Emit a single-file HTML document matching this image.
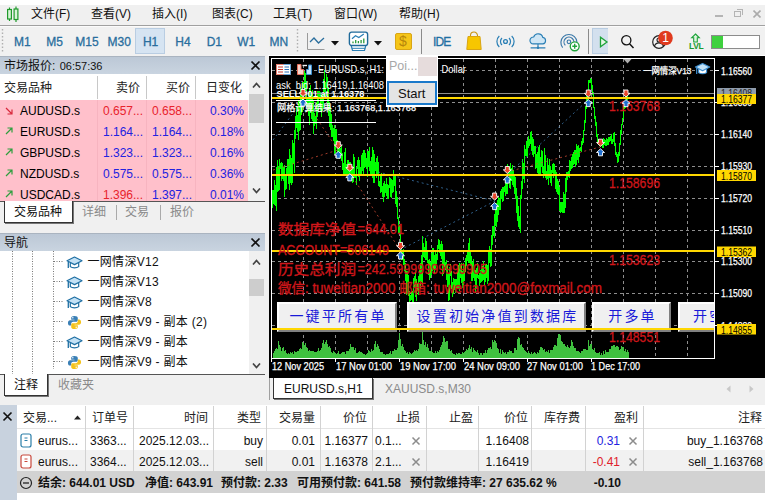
<!DOCTYPE html>
<html lang="zh-CN">
<head>
<meta charset="utf-8">
<title>MetaTrader 5</title>
<style>
*{box-sizing:border-box;margin:0;padding:0}
html,body{width:765px;height:500px;overflow:hidden;background:#f0f0f0}
body{position:relative;font-family:"Liberation Sans","Noto Sans CJK SC",sans-serif;font-size:12px;color:#000;line-height:1}
.abs{position:absolute}
.t{position:absolute;white-space:nowrap;line-height:14px;height:14px}
/* menu */
#topwhite{left:0;top:0;width:765px;height:5px;background:#fff}
#menubar{left:0;top:5px;width:765px;height:20px;background:#f0f0f0}
#menuline{left:0;top:25px;width:765px;height:1px;background:#a0a0a0}
#toolbar{left:0;top:26px;width:765px;height:30px;background:#f1f1f1}
.mi{top:7px;font-size:12px;color:#111}
.tf{top:35px;font-size:12px;color:#2a6e9d;letter-spacing:0;width:32px;text-align:center;-webkit-text-stroke:.3px #2a6e9d}
/* left panels */
.phead{left:0;width:267px;height:18px;background:linear-gradient(#bcc8d6,#c9d4e0);border-top:1px solid #aab4c0}
.phead .t{left:4px;top:2px;font-size:12px;color:#111}
.x{position:absolute;width:11px;height:11px}
.pink{left:0;width:248px;height:21px;background:#ffc0cb}
.sym{left:20px;font-size:12px;color:#000}
.red{color:#e8232b}.blue{color:#2222e0}
.vsep{position:absolute;width:1px;background:#c8c8c8}
.hsep{position:absolute;height:1px;background:#e4e4e4}
.nav{left:87.500px;font-size:12px;color:#111;letter-spacing:.3px}
/* bottom */
.th{font-size:12px;color:#222}
.td{font-size:12px;color:#111}
</style>
</head>
<body>
<!-- ===== MENU BAR ===== -->
<div class="abs" id="topwhite"></div>
<div class="abs" id="menubar"></div>
<div class="abs" id="menuline"></div>
<div class="abs" id="toolbar"></div>
<div class="abs" id="tl2" style="left:0;top:26px;width:765px;height:1px;background:#fbfbfb"></div>
<svg class="abs" style="left:6px;top:6px" width="14" height="17" viewBox="0 0 14 17">
  <path d="M3.5 1.5v2M3.5 13v2M10 0.5v2.5M10 13.5v2.5" stroke="#1f9a2b" stroke-width="1.2" fill="none"/>
  <rect x="1.6" y="3.5" width="3.8" height="9.5" fill="#d8f5d8" stroke="#1f9a2b" stroke-width="1.2"/>
  <rect x="8.1" y="3" width="3.8" height="10.5" fill="#d8f5d8" stroke="#1f9a2b" stroke-width="1.2"/>
</svg>
<div class="t mi" style="left:31px">文件(F)</div>
<div class="t mi" style="left:91px">查看(V)</div>
<div class="t mi" style="left:152px">插入(I)</div>
<div class="t mi" style="left:212px">图表(C)</div>
<div class="t mi" style="left:273px">工具(T)</div>
<div class="t mi" style="left:334px">窗口(W)</div>
<div class="t mi" style="left:399px">帮助(H)</div>
<!-- window buttons -->
<div class="abs" style="left:715px;top:15px;width:8px;height:2px;background:#b4b4b4"></div>
<div class="abs" style="left:734px;top:11px;width:7px;height:6px;border:1.5px solid #b4b4b4"></div>
<div class="abs" style="left:737px;top:9px;width:6px;height:2px;border-top:1.5px solid #b4b4b4;border-right:1.5px solid #b4b4b4;height:6px"></div>
<svg class="abs" style="left:753px;top:10px" width="8" height="8"><path d="M0.5 0.5l7 7M7.5 0.5l-7 7" stroke="#ababab" stroke-width="1.6"/></svg>

<!-- ===== TOOLBAR ===== -->
<svg class="abs" style="left:1px;top:28px" width="4" height="26"><path d="M1.5 1v24" stroke="#b0b0b0" stroke-width="1.4" stroke-dasharray="1.5 2"/></svg>
<div class="abs" style="left:135px;top:28px;width:30px;height:26px;background:#d6e4f2;border:1px solid #b9cde2"></div>
<div class="t tf" style="left:6.3px">M1</div>
<div class="t tf" style="left:38.5px">M5</div>
<div class="t tf" style="left:70.9px">M15</div>
<div class="t tf" style="left:103.2px">M30</div>
<div class="t tf" style="left:134.6px">H1</div>
<div class="t tf" style="left:167.0px">H4</div>
<div class="t tf" style="left:198.3px">D1</div>
<div class="t tf" style="left:230.2px">W1</div>
<div class="t tf" style="left:262.9px">MN</div>
<svg class="abs" style="left:296px;top:28px" width="4" height="26"><path d="M1.5 1v24" stroke="#b0b0b0" stroke-width="1.4" stroke-dasharray="1.5 2"/></svg>
<!-- line chart icon -->
<svg class="abs" style="left:306px;top:32px" width="20" height="20" viewBox="0 0 20 20">
  <path d="M1.5 1v16.5h17" stroke="#9a9a9a" stroke-width="1" fill="none"/>
  <path d="M4 10l4-4 4.5 5 5.5-5" stroke="#2a6e9d" stroke-width="1.3" fill="none"/>
</svg>
<svg class="abs" style="left:330.500px;top:41px" width="8" height="5"><path d="M0 0h8l-4 4.5z" fill="#111"/></svg>
<!-- indicator icon -->
<svg class="abs" style="left:348px;top:31px" width="21" height="21" viewBox="0 0 21 21">
  <path d="M3.200 14.500l1.300 5h12l1.300-5" fill="#fff" stroke="#2a7fb5" stroke-width="1.200"/>
  <path d="M3.800 17.300h13.400" stroke="#2a7fb5" stroke-width="1"/>
  <rect x="1.400" y="1.100" width="18.200" height="13.400" rx="2.200" fill="#fff" stroke="#1f6a9a" stroke-width="1.400"/>
  <path d="M4 7.800l3.500-3l3.300 1.800l5-3.600" stroke="#2a7fb5" stroke-width="1.200" fill="none"/>
  <path d="M5 12.300v-1.800M7.700 12.300v-3.300M10.400 12.300v-2.200M13.100 12.300v-3.300M15.800 12.300v-4.800" stroke="#2a9a3a" stroke-width="1.300"/>
</svg>
<svg class="abs" style="left:374px;top:41px" width="8" height="5"><path d="M0 0h8l-4 4.5z" fill="#111"/></svg>
<!-- $ icon -->
<div class="abs" style="left:395px;top:33px;width:17px;height:17px;background:#f5c518;border:1px solid #d9a514;border-radius:2px"></div>
<div class="t" style="left:399px;top:34px;font-size:14px;color:#b8860b;line-height:15px">$</div>
<div class="abs" style="left:421px;top:29px;width:1px;height:25px;background:#8a8a8a"></div>
<div class="t" style="left:433px;top:35px;font-size:12px;color:#1f6fa3;letter-spacing:-0.900px;-webkit-text-stroke:.3px #1f6fa3">IDE</div>
<!-- bag -->
<svg class="abs" style="left:465px;top:31px" width="18" height="20" viewBox="0 0 18 20">
  <path d="M5.500 6V4.500a3.500 3.500 0 0 1 7 0V6" stroke="#c99410" stroke-width="1.100" fill="none"/>
  <path d="M3 5.500h12l1.200 13H1.800z" fill="#f7c600" stroke="#d9a514" stroke-width="1"/>
</svg>
<!-- signal (o) -->
<svg class="abs" style="left:496px;top:35px" width="19" height="13" viewBox="0 0 19 13">
  <circle cx="9.500" cy="6.500" r="1.900" fill="none" stroke="#2a7fb5" stroke-width="1.300"/>
  <path d="M6 3a4.800 4.800 0 0 0 0 7M13 3a4.800 4.800 0 0 1 0 7" stroke="#2a7fb5" stroke-width="1.200" fill="none"/>
  <path d="M3.300 1a7.500 7.500 0 0 0 0 11M15.700 1a7.500 7.500 0 0 1 0 11" stroke="#2a7fb5" stroke-width="1.200" fill="none"/>
</svg>
<!-- cloud -->
<svg class="abs" style="left:528px;top:33px" width="20" height="17.500" viewBox="0 0 23 20">
  <path d="M6 12.500a4 4 0 0 1 0.500-8a5.500 5.500 0 0 1 10.500 0.500a3.800 3.800 0 0 1 0 7.500z" fill="#cfe6f5" stroke="#2a7fb5" stroke-width="1.3"/>
  <path d="M11.500 12.500v4M3 17h17" stroke="#2a7fb5" stroke-width="1.3"/>
  <circle cx="11.500" cy="17" r="1.400" fill="#2a7fb5"/>
</svg>
<!-- signals+ -->
<svg class="abs" style="left:560px;top:32px" width="20.500" height="20.500" viewBox="0 0 23 23">
  <circle cx="10" cy="11" r="2" fill="none" stroke="#3a78a8" stroke-width="1.300"/>
  <path d="M14 15a5.500 5.500 0 1 0-8 0" fill="none" stroke="#3a78a8" stroke-width="1.300"/>
  <path d="M17 17.500a9 9 0 1 0-14 0" fill="none" stroke="#3a78a8" stroke-width="1.300"/>
  <circle cx="16.500" cy="16" r="5" fill="#fff" stroke="#1ea33a" stroke-width="1.500"/>
  <path d="M13.800 16h5.400M16.500 13.300v5.400" stroke="#1ea33a" stroke-width="1.500"/>
</svg>
<div class="abs" style="left:588px;top:29px;width:1px;height:25px;background:#8a8a8a"></div>
<div class="abs" style="left:592px;top:28px;width:16px;height:26px;background:#d3e0ee;border:1px solid #b9cde2;border-right:0"></div>
<svg class="abs" style="left:599px;top:36px" width="10" height="12"><path d="M1.500 1.200v9.600l6.500-4.800z" fill="#e6f7e6" stroke="#1ea33a" stroke-width="1.300"/></svg>
<!-- search -->
<svg class="abs" style="left:620px;top:34px" width="15" height="15" viewBox="0 0 15 15">
  <circle cx="6.300" cy="6.300" r="4.600" fill="none" stroke="#111" stroke-width="1.300"/>
  <path d="M9.500 9.800l4 4.200" stroke="#111" stroke-width="1.500"/>
</svg>
<!-- chat/user -->
<svg class="abs" style="left:650px;top:28px" width="26" height="26" viewBox="0 0 26 26">
  <circle cx="9" cy="14" r="6.300" fill="#f4f4f4" stroke="#222" stroke-width="1.200"/>
  <circle cx="9" cy="12" r="2" fill="none" stroke="#222" stroke-width="1.100"/>
  <path d="M4.500 18a4.800 4.800 0 0 1 9 0" fill="none" stroke="#222" stroke-width="1.100"/>
  <circle cx="15.500" cy="10" r="7.300" fill="#e03a1e"/>
  <text x="15.500" y="14.200" font-size="12" fill="#fff" text-anchor="middle" font-family="Liberation Sans, sans-serif">1</text>
</svg>
<!-- LVL -->
<svg class="abs" style="left:690px;top:33px" width="11" height="10" viewBox="0 0 11 10">
  <path d="M5.500 1l3.800 3.800h-2v4.200h-3.600v-4.200h-2z" fill="#dff5df" stroke="#1ea33a" stroke-width="1.100"/>
</svg>
<div class="t" style="left:689px;top:42px;font-size:8.500px;color:#1a9a30;line-height:8px;height:8px;letter-spacing:-0.4px;font-weight:bold">LVL</div>
<div class="abs" style="left:711px;top:35px;width:49px;height:14px;background:#fff;border:1px solid #8c8c8c"></div>
<div class="abs" style="left:712px;top:36px;width:11px;height:12px;background:#3fd13f"></div>

<div class="abs" id="wl" style="left:268px;top:55px;width:497px;height:1px;background:#fff"></div>
<div class="abs" style="left:268px;top:55px;width:1px;height:345px;background:#fff"></div>
<!-- ===== MARKET WATCH ===== -->
<div class="abs phead" style="top:56px;width:265px"><div class="t">市场报价: <span style="font-size:11px;margin-left:1px">06:57:36</span></div></div>
<svg class="x" style="left:250px;top:60px" viewBox="0 0 11 11"><path d="M1.500 1.500l8 8M9.500 1.500l-8 8" stroke="#111" stroke-width="1.700"/></svg>
<div class="abs" style="left:0;top:74px;width:249px;height:26px;background:#fff"></div>
<div class="abs" style="left:249px;top:74px;width:16px;height:127px;background:#f0f0f0"></div>
<div class="abs" style="left:249px;top:94px;width:15px;height:29px;background:#cdcdcd"></div>
<svg class="abs" style="left:252px;top:82px" width="9" height="6"><path d="M1 5.500l3.500-4l3.500 4" stroke="#444" stroke-width="1.700" fill="none"/></svg>
<svg class="abs" style="left:252px;top:188px" width="9" height="6"><path d="M1 0.500l3.500 4l3.500-4" stroke="#444" stroke-width="1.700" fill="none"/></svg>
<div class="t th" style="left:4px;top:81px">交易品种</div>
<div class="t th" style="left:116px;top:81px">卖价</div>
<div class="t th" style="left:166px;top:81px">买价</div>
<div class="t th" style="left:206px;top:81px">日变化</div>
<div class="vsep" style="left:97px;top:76px;height:23px"></div>
<div class="vsep" style="left:146px;top:76px;height:23px"></div>
<div class="vsep" style="left:195px;top:76px;height:23px"></div>
<div class="abs" style="left:0;top:100px;width:248px;height:101px;background:#ffc0cb"></div>
<div class="abs" style="left:97px;top:100px;width:1px;height:101px;background:#f7b4c0"></div>
<div class="abs" style="left:146px;top:100px;width:1px;height:101px;background:#f7b4c0"></div>
<div class="abs" style="left:195px;top:100px;width:1px;height:101px;background:#f7b4c0"></div>
<svg class="abs" style="left:5px;top:107px" width="8" height="8"><path d="M1 1l6 6M2.500 7h4.500v-4.500" stroke="#d8283c" stroke-width="1.200" fill="none"/></svg><div class="t sym" style="top:104px">AUDUSD.s</div><div class="t red" style="left:103px;top:104px">0.657...</div><div class="t red" style="left:152px;top:104px">0.658...</div><div class="t blue" style="right:521px;top:104px">0.30%</div>
<svg class="abs" style="left:5px;top:127px" width="8" height="8"><path d="M1 7l6-6M2.500 1h4.500v4.500" stroke="#2e9e3e" stroke-width="1.200" fill="none"/></svg><div class="t sym" style="top:125px">EURUSD.s</div><div class="t blue" style="left:103px;top:125px">1.164...</div><div class="t blue" style="left:152px;top:125px">1.164...</div><div class="t blue" style="right:521px;top:125px">0.18%</div>
<svg class="abs" style="left:5px;top:148px" width="8" height="8"><path d="M1 7l6-6M2.500 1h4.500v4.500" stroke="#2e9e3e" stroke-width="1.200" fill="none"/></svg><div class="t sym" style="top:146px">GBPUSD.s</div><div class="t blue" style="left:103px;top:146px">1.323...</div><div class="t blue" style="left:152px;top:146px">1.323...</div><div class="t blue" style="right:521px;top:146px">0.16%</div>
<svg class="abs" style="left:5px;top:169px" width="8" height="8"><path d="M1 7l6-6M2.500 1h4.500v4.500" stroke="#2e9e3e" stroke-width="1.200" fill="none"/></svg><div class="t sym" style="top:167px">NZDUSD.s</div><div class="t blue" style="left:103px;top:167px">0.575...</div><div class="t blue" style="left:152px;top:167px">0.575...</div><div class="t blue" style="right:521px;top:167px">0.36%</div>
<svg class="abs" style="left:5px;top:190px" width="8" height="8"><path d="M1 7l6-6M2.500 1h4.500v4.500" stroke="#2e9e3e" stroke-width="1.200" fill="none"/></svg><div class="t sym" style="top:188px">USDCAD.s</div><div class="t red" style="left:103px;top:188px">1.396...</div><div class="t blue" style="left:152px;top:188px">1.397...</div><div class="t blue" style="right:521px;top:188px">0.01%</div>

<div class="abs" style="left:0;top:201px;width:267px;height:24px;background:#f0f0f0"></div>
<div class="abs" style="left:0;top:201px;width:265px;height:1px;background:#555"></div>
<div class="abs" style="left:4px;top:201px;width:69px;height:22px;background:#fff;border:1px solid #333;border-top:0;box-shadow:1px 1px 0 #777"></div>
<div class="t" style="left:14px;top:205px;font-size:12px;color:#111">交易品种</div>
<div class="t" style="left:82px;top:205px;font-size:12px;color:#8a8a8a">详细</div>
<div class="t" style="left:125px;top:205px;font-size:12px;color:#8a8a8a">交易</div>
<div class="t" style="left:170px;top:205px;font-size:12px;color:#8a8a8a">报价</div>
<div class="abs" style="left:116px;top:205px;width:1px;height:15px;background:#aaa"></div>
<div class="abs" style="left:160px;top:205px;width:1px;height:15px;background:#aaa"></div>

<!-- ===== NAVIGATOR ===== -->
<div class="abs phead" style="top:233px;width:265px"><div class="t">导航</div></div>
<svg class="x" style="left:250px;top:237px" viewBox="0 0 11 11"><path d="M1.500 1.500l8 8M9.500 1.500l-8 8" stroke="#111" stroke-width="1.700"/></svg>
<div class="abs" style="left:0;top:251px;width:249px;height:123px;background:#fff"></div>
<div class="abs" style="left:249px;top:251px;width:16px;height:123px;background:#f0f0f0"></div>
<div class="abs" style="left:249px;top:279px;width:15px;height:17px;background:#cdcdcd"></div>
<svg class="abs" style="left:252px;top:259px" width="9" height="6"><path d="M1 5.500l3.500-4l3.500 4" stroke="#444" stroke-width="1.700" fill="none"/></svg>
<svg class="abs" style="left:252px;top:363px" width="9" height="6"><path d="M1 0.500l3.500 4l3.500-4" stroke="#444" stroke-width="1.700" fill="none"/></svg>
<svg class="abs" style="left:10px;top:251px" width="60" height="123">
  <path d="M2.500 0v123M22.500 0v123M43.500 0v118" stroke="#777" stroke-width="1" stroke-dasharray="1 1.500"/>
  <path d="M44 10.500h10M44 30.500h10M44 50.500h10M44 70.500h10M44 90.500h10M44 110.500h10" stroke="#777" stroke-width="1" stroke-dasharray="1 1.500"/>
</svg>
<svg class="abs" style="left:66px;top:256px" width="17" height="14" viewBox="0 0 17 14"><path d="M4.300 6.800v3.800c2 1.700 6.400 1.700 8.400 0v-3.800" fill="#fff" stroke="#1f6fa3" stroke-width="1.200"/><path d="M1 4.800l7.500-3.800l7.500 3.800l-7.500 3.800z" fill="#c4e2f6" stroke="#1f6fa3" stroke-width="1.200" stroke-linejoin="round"/><path d="M2.300 5.800v6.200" stroke="#1f6fa3" stroke-width="1.300"/></svg><div class="t nav" style="top:255px">一网情深V12</div>
<svg class="abs" style="left:66px;top:276px" width="17" height="14" viewBox="0 0 17 14"><path d="M4.300 6.800v3.800c2 1.700 6.400 1.700 8.400 0v-3.800" fill="#fff" stroke="#1f6fa3" stroke-width="1.200"/><path d="M1 4.800l7.500-3.800l7.500 3.800l-7.500 3.800z" fill="#c4e2f6" stroke="#1f6fa3" stroke-width="1.200" stroke-linejoin="round"/><path d="M2.300 5.800v6.200" stroke="#1f6fa3" stroke-width="1.300"/></svg><div class="t nav" style="top:275px">一网情深V13</div>
<svg class="abs" style="left:66px;top:296px" width="17" height="14" viewBox="0 0 17 14"><path d="M4.300 6.800v3.800c2 1.700 6.400 1.700 8.400 0v-3.800" fill="#fff" stroke="#1f6fa3" stroke-width="1.200"/><path d="M1 4.800l7.500-3.800l7.500 3.800l-7.500 3.800z" fill="#c4e2f6" stroke="#1f6fa3" stroke-width="1.200" stroke-linejoin="round"/><path d="M2.300 5.800v6.200" stroke="#1f6fa3" stroke-width="1.300"/></svg><div class="t nav" style="top:295px">一网情深V8</div>
<svg class="abs" style="left:67px;top:315px" width="15" height="15" viewBox="0 0 16 16"><path d="M7.900 1C5 1 4.500 2.200 4.500 3.200V5h3.500v.7H3.200C2 5.700 1 6.700 1 8.400c0 1.800.9 2.800 2.100 2.800h1.400V9.300c0-1.100.9-2 2-2h3.400c.9 0 1.600-.7 1.600-1.600V3.200C11.500 2 10.500 1 7.900 1z" fill="#3a7fb5"/><path d="M7.900 1C5 1 4.500 2.200 4.500 3.200V5h3.500v.7H3.200C2 5.700 1 6.700 1 8.400c0 1.800.9 2.800 2.100 2.800h1.400V9.300c0-1.100.9-2 2-2h3.400c.9 0 1.600-.7 1.600-1.600V3.200C11.500 2 10.500 1 7.900 1z" fill="#f4c21a" transform="rotate(180 8 8)"/><circle cx="6.200" cy="3" r=".8" fill="#fff"/><circle cx="9.800" cy="13" r=".8" fill="#fff"/></svg><div class="t nav" style="top:315px">一网情深V9 - 副本 (2)</div>
<svg class="abs" style="left:66px;top:336px" width="17" height="14" viewBox="0 0 17 14"><path d="M4.300 6.800v3.800c2 1.700 6.400 1.700 8.400 0v-3.800" fill="#fff" stroke="#1f6fa3" stroke-width="1.200"/><path d="M1 4.800l7.500-3.800l7.500 3.800l-7.500 3.800z" fill="#c4e2f6" stroke="#1f6fa3" stroke-width="1.200" stroke-linejoin="round"/><path d="M2.300 5.800v6.200" stroke="#1f6fa3" stroke-width="1.300"/></svg><div class="t nav" style="top:335px">一网情深V9 - 副本</div>
<svg class="abs" style="left:67px;top:355px" width="15" height="15" viewBox="0 0 16 16"><path d="M7.900 1C5 1 4.500 2.200 4.500 3.200V5h3.500v.7H3.200C2 5.700 1 6.700 1 8.400c0 1.800.9 2.800 2.100 2.800h1.400V9.300c0-1.100.9-2 2-2h3.400c.9 0 1.600-.7 1.600-1.600V3.200C11.500 2 10.500 1 7.900 1z" fill="#3a7fb5"/><path d="M7.900 1C5 1 4.500 2.200 4.500 3.200V5h3.500v.7H3.200C2 5.700 1 6.700 1 8.400c0 1.800.9 2.800 2.100 2.800h1.400V9.300c0-1.100.9-2 2-2h3.400c.9 0 1.600-.7 1.600-1.600V3.200C11.500 2 10.500 1 7.900 1z" fill="#f4c21a" transform="rotate(180 8 8)"/><circle cx="6.200" cy="3" r=".8" fill="#fff"/><circle cx="9.800" cy="13" r=".8" fill="#fff"/></svg><div class="t nav" style="top:355px">一网情深V9 - 副本</div>

<div class="abs" style="left:0;top:374px;width:267px;height:26px;background:#f0f0f0"></div>
<div class="abs" style="left:0;top:374px;width:265px;height:1px;background:#555"></div>
<div class="abs" style="left:4px;top:374px;width:44px;height:22px;background:#fff;border:1px solid #333;border-top:0;box-shadow:1px 1px 0 #777"></div>
<div class="t" style="left:14px;top:378px;font-size:12px;color:#111">注释</div>
<div class="t" style="left:58px;top:378px;font-size:12px;color:#8a8a8a">收藏夹</div>

<!-- ===== CHART ===== -->
<div class="abs" style="left:269px;top:56px;width:496px;height:322px;background:#000"></div>
<div class="abs" style="left:267px;top:56px;width:2px;height:344px;background:#f0f0f0"></div>
<svg class="abs" style="left:269px;top:56px" width="496" height="321" viewBox="269 56 496 321" font-family="Liberation Sans, Noto Sans CJK SC, sans-serif">
  <!-- grid -->
  <g stroke="#8e8e8e" stroke-width="1" stroke-dasharray="3.300 2.700" fill="none" shape-rendering="crispEdges">
    <path d="M303.5 59V358M335.5 59V358M367.5 59V358M399.5 59V358M431.5 59V358M463.5 59V358M495.5 59V358M527.5 59V358M559.5 59V358M591.5 59V358M623.5 59V358M655.5 59V358M687.5 59V358"/>
    <path d="M272 70.500H714M272 102.500H714M272 134.500H714M272 166.500H714M272 198.500H714M272 230.500H714M272 261.500H714M272 293.500H714M272 325.500H714"/>
  </g>
  <!-- volumes -->
  <path d="M273.5 358V353M274.5 358V351M275.5 358V349M276.5 358V348M277.5 358V349M278.5 358V341M279.5 358V345M280.5 358V347M281.5 358V351M282.5 358V348M283.5 358V347M284.5 358V351M285.5 358V350M286.5 358V353M287.5 358V354M288.5 358V353M289.5 358V354M290.5 358V352M291.5 358V353M292.5 358V352M293.5 358V354M294.5 358V351M295.5 358V352M296.5 358V352M297.5 358V351M298.5 358V351M299.5 358V349M300.5 358V348M301.5 358V349M302.5 358V342M303.5 358V343M304.5 358V345M305.5 358V343M306.5 358V347M307.5 358V348M308.5 358V351M309.5 358V350M310.5 358V351M311.5 358V351M312.5 358V351M313.5 358V351M314.5 358V352M315.5 358V352M316.5 358V352M317.5 358V351M318.5 358V348M319.5 358V351M320.5 358V350M321.5 358V348M322.5 358V343M323.5 358V340M324.5 358V344M325.5 358V342M326.5 358V340M327.5 358V344M328.5 358V347M329.5 358V346M330.5 358V348M331.5 358V352M332.5 358V353M333.5 358V351M334.5 358V352M335.5 358V353M336.5 358V354M337.5 358V353M338.5 358V351M339.5 358V354M340.5 358V354M341.5 358V353M342.5 358V352M343.5 358V352M344.5 358V352M345.5 358V354M346.5 358V351M347.5 358V351M348.5 358V351M349.5 358V349M350.5 358V344M351.5 358V347M352.5 358V347M353.5 358V347M354.5 358V350M355.5 358V348M356.5 358V353M357.5 358V353M358.5 358V352M359.5 358V351M360.5 358V352M361.5 358V352M362.5 358V353M363.5 358V354M364.5 358V354M365.5 358V355M366.5 358V354M367.5 358V353M368.5 358V350M369.5 358V351M370.5 358V352M371.5 358V349M372.5 358V351M373.5 358V350M374.5 358V344M375.5 358V341M376.5 358V347M377.5 358V344M378.5 358V346M379.5 358V349M380.5 358V352M381.5 358V352M382.5 358V352M383.5 358V354M384.5 358V354M385.5 358V355M386.5 358V354M387.5 358V354M388.5 358V354M389.5 358V353M390.5 358V351M391.5 358V354M392.5 358V351M393.5 358V351M394.5 358V349M395.5 358V350M396.5 358V350M397.5 358V348M398.5 358V340M399.5 358V333M400.5 358V339M401.5 358V346M402.5 358V344M403.5 358V347M404.5 358V350M405.5 358V351M406.5 358V353M407.5 358V352M408.5 358V354M409.5 358V352M410.5 358V353M411.5 358V354M412.5 358V353M413.5 358V352M414.5 358V350M415.5 358V351M416.5 358V350M417.5 358V351M418.5 358V349M419.5 358V343M420.5 358V344M421.5 358V344M422.5 358V326M423.5 358V340M424.5 358V345M425.5 358V342M426.5 358V347M427.5 358V344M428.5 358V348M429.5 358V351M430.5 358V351M431.5 358V350M432.5 358V352M433.5 358V353M434.5 358V353M435.5 358V351M436.5 358V353M437.5 358V351M438.5 358V352M439.5 358V350M440.5 358V347M441.5 358V345M442.5 358V342M443.5 358V336M444.5 358V338M445.5 358V342M446.5 358V341M447.5 358V341M448.5 358V349M449.5 358V349M450.5 358V351M451.5 358V350M452.5 358V353M453.5 358V354M454.5 358V354M455.5 358V355M456.5 358V353M457.5 358V354M458.5 358V353M459.5 358V353M460.5 358V354M461.5 358V354M462.5 358V352M463.5 358V353M464.5 358V352M465.5 358V351M466.5 358V349M467.5 358V350M468.5 358V348M469.5 358V345M470.5 358V349M471.5 358V347M472.5 358V352M473.5 358V348M474.5 358V350M475.5 358V351M476.5 358V352M477.5 358V350M478.5 358V353M479.5 358V355M480.5 358V353M481.5 358V353M482.5 358V355M483.5 358V353M484.5 358V353M485.5 358V350M486.5 358V353M487.5 358V350M488.5 358V348M489.5 358V348M490.5 358V347M491.5 358V349M492.5 358V340M493.5 358V342M494.5 358V340M495.5 358V341M496.5 358V343M497.5 358V348M498.5 358V349M499.5 358V353M500.5 358V349M501.5 358V354M502.5 358V350M503.5 358V352M504.5 358V353M505.5 358V352M506.5 358V354M507.5 358V352M508.5 358V352M509.5 358V350M510.5 358V351M511.5 358V351M512.5 358V353M513.5 358V353M514.5 358V348M515.5 358V348M516.5 358V350M517.5 358V339M518.5 358V337M519.5 358V338M520.5 358V345M521.5 358V344M522.5 358V347M523.5 358V348M524.5 358V350M525.5 358V351M526.5 358V352M527.5 358V353M528.5 358V351M529.5 358V353M530.5 358V354M531.5 358V352M532.5 358V354M533.5 358V353M534.5 358V352M535.5 358V353M536.5 358V354M537.5 358V352M538.5 358V353M539.5 358V350M540.5 358V347M541.5 358V347M542.5 358V348M543.5 358V350M544.5 358V349M545.5 358V352M546.5 358V351M547.5 358V352M548.5 358V350M549.5 358V353M550.5 358V350M551.5 358V350M552.5 358V350M553.5 358V347M554.5 358V345M555.5 358V345M556.5 358V346M557.5 358V338M558.5 358V334M559.5 358V334M560.5 358V335M561.5 358V341M562.5 358V342M563.5 358V344M564.5 358V344M565.5 358V346M566.5 358V347M567.5 358V345M568.5 358V347M569.5 358V348M570.5 358V346M571.5 358V340M572.5 358V342M573.5 358V346M574.5 358V348M575.5 358V348M576.5 358V351M577.5 358V351M578.5 358V351M579.5 358V352M580.5 358V353M581.5 358V351M582.5 358V351M583.5 358V349M584.5 358V349M585.5 358V349M586.5 358V350M587.5 358V350M588.5 358V340M589.5 358V346M590.5 358V344M591.5 358V344M592.5 358V349M593.5 358V350M594.5 358V348M595.5 358V352M596.5 358V353M597.5 358V353M598.5 358V353M599.5 358V352M600.5 358V355M601.5 358V353M602.5 358V355M603.5 358V351M604.5 358V354M605.5 358V350M606.5 358V352M607.5 358V352M608.5 358V352M609.5 358V349M610.5 358V349M611.5 358V346M612.5 358V346M613.5 358V345M614.5 358V345M615.5 358V347M616.5 358V346M617.5 358V346M618.5 358V347M619.5 358V350M620.5 358V349M621.5 358V346M622.5 358V347M623.5 358V347M624.5 358V351M625.5 358V349M626.5 358V352M627.5 358V350M628.5 358V352" stroke="#3fc13f" stroke-width="1" shape-rendering="crispEdges"/>
  <!-- price -->
  <path d="M272.5 190V208M273.5 190V204M274.5 180V205M275.5 185V206M276.5 167V211M277.5 160V192M278.5 166V191M279.5 159V190M280.5 163V169M281.5 162V181M282.5 163V179M283.5 167V181M284.5 165V197M285.5 176V190M286.5 168V189M287.5 159V175M288.5 159V184M289.5 149V190M290.5 155V183M291.5 158V185M292.5 140V183M293.5 143V164M294.5 130V173M295.5 116V139M296.5 106V128M297.5 115V132M298.5 100V140M299.5 100V131M300.5 87V130M301.5 91V115M302.5 82V112M303.5 82V88M304.5 71V89M305.5 73V91M306.5 81V107M307.5 98V107M308.5 95V116M309.5 88V125M310.5 85V113M311.5 95V119M312.5 90V121M313.5 100V134M314.5 113V126M315.5 116V124M316.5 102V129M317.5 91V117M318.5 91V110M319.5 91V99M320.5 92V111M321.5 95V117M322.5 93V111M323.5 79V108M324.5 70V92M325.5 82V99M326.5 74V88M327.5 77V106M328.5 87V116M329.5 102V127M330.5 107V130M331.5 114V137M332.5 125V137M333.5 128V141M334.5 125V154M335.5 129V153M336.5 129V142M337.5 140V156M338.5 145V157M339.5 142V159M340.5 148V154M341.5 146V161M342.5 153V170M343.5 163V174M344.5 152V175M345.5 148V176M346.5 164V174M347.5 160V176M348.5 160V177M349.5 162V177M350.5 162V174M351.5 166V180M352.5 169V183M353.5 154V182M354.5 157V178M355.5 174V178M356.5 167V185M357.5 160V169M358.5 157V177M359.5 160V181M360.5 167V176M361.5 155V176M362.5 153V171M363.5 150V174M364.5 150V168M365.5 153V167M366.5 158V169M367.5 151V177M368.5 151V167M369.5 147V171M370.5 161V174M371.5 157V176M372.5 147V178M373.5 150V183M374.5 154V183M375.5 162V171M376.5 158V178M377.5 156V174M378.5 162V186M379.5 181V187M380.5 175V193M381.5 173V192M382.5 186V197M383.5 183V202M384.5 181V197M385.5 184V193M386.5 178V196M387.5 184V199M388.5 185V199M389.5 177V188M390.5 178V197M391.5 179V198M392.5 180V193M393.5 170V192M394.5 175V186M395.5 176V204M396.5 191V207M397.5 197V219M398.5 217V233M399.5 225V234M400.5 226V245M401.5 242V260M402.5 250V260M403.5 249V265M404.5 259V271M405.5 263V281M406.5 271V295M407.5 271V294M408.5 275V296M409.5 291V305M410.5 295V301M411.5 292V300M412.5 291V303M413.5 278V302M414.5 276V288M415.5 270V297M416.5 279V301M417.5 284V291M418.5 276V295M419.5 270V282M420.5 263V289M421.5 255V282M422.5 236V286M423.5 243V257M424.5 247V258M425.5 238V260M426.5 241V260M427.5 250V263M428.5 260V275M429.5 259V280M430.5 262V278M431.5 253V275M432.5 248V271M433.5 248V270M434.5 255V273M435.5 251V270M436.5 254V264M437.5 245V260M438.5 239V249M439.5 240V253M440.5 244V256M441.5 241V259M442.5 244V276M443.5 250V274M444.5 252V267M445.5 262V270M446.5 260V280M447.5 265V287M448.5 274V301M449.5 267V300M450.5 264V276M451.5 271V289M452.5 282V297M453.5 278V294M454.5 279V290M455.5 279V293M456.5 279V289M457.5 272V288M458.5 265V289M459.5 263V291M460.5 264V278M461.5 263V283M462.5 271V288M463.5 263V289M464.5 269V281M465.5 258V272M466.5 255V266M467.5 250V261M468.5 243V263M469.5 238V263M470.5 251V266M471.5 256V281M472.5 262V281M473.5 259V278M474.5 270V281M475.5 270V293M476.5 268V288M477.5 263V278M478.5 275V279M479.5 273V286M480.5 270V283M481.5 266V282M482.5 266V281M483.5 261V280M484.5 270V285M485.5 265V282M486.5 264V278M487.5 265V284M488.5 250V281M489.5 246V263M490.5 249V267M491.5 235V266M492.5 226V245M493.5 226V236M494.5 214V238M495.5 204V226M496.5 203V227M497.5 200V222M498.5 197V215M499.5 198V210M500.5 191V210M501.5 189V199M502.5 187V202M503.5 187V201M504.5 186V192M505.5 178V196M506.5 177V194M507.5 164V194M508.5 166V175M509.5 166V188M510.5 163V189M511.5 168V181M512.5 165V185M513.5 170V187M514.5 174V194M515.5 177V199M516.5 188V213M517.5 196V221M518.5 206V227M519.5 216V229M520.5 195V233M521.5 181V199M522.5 159V189M523.5 163V179M524.5 145V183M525.5 149V156M526.5 141V156M527.5 140V157M528.5 136V148M529.5 139V146M530.5 132V144M531.5 131V151M532.5 137V155M533.5 139V157M534.5 146V154M535.5 146V169M536.5 154V168M537.5 152V173M538.5 147V174M539.5 145V176M540.5 157V174M541.5 150V167M542.5 151V173M543.5 166V178M544.5 148V176M545.5 155V178M546.5 171V180M547.5 158V179M548.5 165V185M549.5 159V178M550.5 166V183M551.5 170V186M552.5 164V173M553.5 163V178M554.5 164V176M555.5 170V189M556.5 172V192M557.5 179V194M558.5 181V195M559.5 187V211M560.5 202V213M561.5 202V212M562.5 202V213M563.5 192V213M564.5 194V213M565.5 178V208M566.5 172V192M567.5 172V180M568.5 171V177M569.5 160V178M570.5 161V171M571.5 157V169M572.5 154V168M573.5 152V165M574.5 150V164M575.5 150V167M576.5 144V165M577.5 146V160M578.5 145V163M579.5 148V157M580.5 147V151M581.5 141V152M582.5 138V145M583.5 130V143M584.5 120V131M585.5 106V123M586.5 96V109M587.5 91V101M588.5 80V93M589.5 80V83M590.5 78V83M591.5 79V89M592.5 85V95M593.5 92V108M594.5 107V119M595.5 116V126M596.5 122V137M597.5 134V142M598.5 139V145M599.5 142V146M600.5 142V147M601.5 142V146M602.5 144V148M603.5 138V148M604.5 139V145M605.5 140V146M606.5 138V146M607.5 139V145M608.5 137V145M609.5 137V142M610.5 136V141M611.5 134V144M612.5 139V144M613.5 133V142M614.5 132V146M615.5 143V155M616.5 152V157M617.5 154V163M618.5 152V162M619.5 143V156M620.5 130V145M621.5 124V134M622.5 118V125M623.5 106V119M624.5 105V109M625.5 100V108M626.5 95V103M627.5 95V100" stroke="#00ff00" stroke-width="1" shape-rendering="crispEdges"/>
  <!-- trade lines -->
  <g fill="none" stroke-width="1" stroke-dasharray="2 3" opacity=".75">
    <path d="M273 170L338 150M303 98L338 150M350 173L400 250M507 172L600 147" stroke="#d8503a"/>
    <path d="M273 140L303 100M400 250L495 201M378 172L495 201M507 175L588 100" stroke="#3f7fb8"/>
  </g>
  <!-- bid line -->
  <path d="M272 93.500H714" stroke="#8c8c8c" stroke-width="1" shape-rendering="crispEdges"/>
  <!-- yellow levels -->
  <g fill="#ffd700" shape-rendering="crispEdges">
    <rect x="272" y="97" width="442" height="2"/>
    <rect x="272" y="174" width="442" height="2"/>
    <rect x="272" y="250" width="442" height="2"/>
    <rect x="272" y="328" width="442" height="2"/>
  </g>
  <!-- frame -->
  <path d="M271.500 58.500H714.500V358.500H271.500z" stroke="#fff" stroke-width="1" fill="none" shape-rendering="crispEdges"/>
  <path d="M271.500 358V362M335.500 358V362M399.500 358V362M463.500 358V362M527.500 358V362M591.500 358V362" stroke="#fff" stroke-width="1" shape-rendering="crispEdges"/>
  <path d="M715 70.500h4M715 134.500h4M715 166.500h4M715 198.500h4M715 230.500h4M715 261.500h4M715 293.500h4M715 325.500h4M715 102.500h4" stroke="#fff" stroke-width="1" shape-rendering="crispEdges"/>
  <!-- time labels -->
  <g fill="#fff" font-size="10.500" stroke="#fff" stroke-width=".25">
    <text x="272" y="370" textLength="52" lengthAdjust="spacingAndGlyphs">12 Nov 2025</text>
    <text x="336" y="370" textLength="56" lengthAdjust="spacingAndGlyphs">17 Nov 01:00</text>
    <text x="400" y="370" textLength="56" lengthAdjust="spacingAndGlyphs">19 Nov 17:00</text>
    <text x="464" y="370" textLength="56" lengthAdjust="spacingAndGlyphs">24 Nov 09:00</text>
    <text x="527" y="370" textLength="56" lengthAdjust="spacingAndGlyphs">27 Nov 01:00</text>
    <text x="591" y="370" textLength="49" lengthAdjust="spacingAndGlyphs">1 Dec 17:00</text>
  </g>
  <!-- price labels -->
  <g fill="#fff" font-size="10.500" stroke="#fff" stroke-width=".25">
    <text x="721" y="74.500" textLength="31" lengthAdjust="spacingAndGlyphs">1.16560</text>
    <text x="721" y="106" textLength="31" lengthAdjust="spacingAndGlyphs">1.16350</text>
    <text x="721" y="138" textLength="31" lengthAdjust="spacingAndGlyphs">1.16140</text>
    <text x="721" y="170" textLength="31" lengthAdjust="spacingAndGlyphs">1.15930</text>
    <text x="721" y="202" textLength="31" lengthAdjust="spacingAndGlyphs">1.15720</text>
    <text x="721" y="234" textLength="31" lengthAdjust="spacingAndGlyphs">1.15510</text>
    <text x="721" y="265" textLength="31" lengthAdjust="spacingAndGlyphs">1.15300</text>
    <text x="721" y="297" textLength="31" lengthAdjust="spacingAndGlyphs">1.15090</text>
    <text x="721" y="329.500" textLength="31" lengthAdjust="spacingAndGlyphs">1.14880</text>
  </g>
  <rect x="717" y="88" width="39" height="6" fill="#8f9bab"/>
  <text x="721" y="97" font-size="10.500" fill="#222" textLength="31" lengthAdjust="spacingAndGlyphs">1.16408</text>
  <g font-size="10.500">
    <rect x="717" y="94" width="39" height="10" fill="#ffd700"/><text x="721" y="102.500" fill="#000" textLength="31" lengthAdjust="spacingAndGlyphs">1.16377</text>
    <rect x="717" y="170" width="39" height="11" fill="#ffd700"/><text x="721" y="179.500" fill="#000" textLength="31" lengthAdjust="spacingAndGlyphs">1.15870</text>
    <rect x="717" y="246.500" width="39" height="10.500" fill="#ffd700"/><text x="721" y="256" fill="#000" textLength="31" lengthAdjust="spacingAndGlyphs">1.15362</text>
    <rect x="717" y="324" width="39" height="10.500" fill="#ffd700"/><text x="721" y="333.500" fill="#000" textLength="31" lengthAdjust="spacingAndGlyphs">1.14855</text>
  </g>
  <!-- header text -->
  <g fill="#fff" font-size="10.500">
    <rect x="276.500" y="64.500" width="14" height="10" fill="#fff" stroke="#e87c6c" stroke-width="1"/>
    <path d="M283.500 64.500h7v10h-7" fill="none" stroke="#6aa8dc" stroke-width="1"/>
    <path d="M278 67h5M278 69.500h5M278 72h5" stroke="#c8392b" stroke-width="1.200"/>
    <path d="M284.500 67h4.500M284.500 69.500h4.500M284.500 72h4.500" stroke="#2a6fb5" stroke-width="1.200"/>
    <path d="M297.500 74.500V64.500h3.500v5h2.500v5z" fill="#f9d6cc" stroke="#e8705c" stroke-width="1"/>
    <path d="M302.500 65.500h4.500" stroke="#f0f0f0" stroke-width="1.400"/>
    <path d="M306.500 74.500v-5h2v-4.500h3v9.500z" fill="#bfe0f7" stroke="#3f8fcf" stroke-width="1"/>
    <text x="318" y="73" font-size="11" textLength="66" lengthAdjust="spacingAndGlyphs">EURUSD.s, H1:</text>
    <text x="441.500" y="73" font-size="11" textLength="24.500" lengthAdjust="spacingAndGlyphs">Dollar</text>
    <text x="276" y="88.500" font-size="10" textLength="108" lengthAdjust="spacingAndGlyphs">ask_bid: 1.16419,1.16408</text>
    <text x="276.500" y="96.500" font-size="9.500" font-weight="bold" textLength="88" lengthAdjust="spacingAndGlyphs">SELL #01 at 1.16378</text>
    <text x="277" y="110.500" font-size="9.500" stroke="#fff" stroke-width=".25" textLength="139" lengthAdjust="spacingAndGlyphs">网格计算结果: 1.163768,1.163768</text>
    <text x="643" y="73.500" font-size="9.500" stroke="#fff" stroke-width=".25" textLength="48.500" lengthAdjust="spacingAndGlyphs">一网情深V13</text>
  </g>
  <path d="M276 100.500H376M276 122.500H376" stroke="#fff" stroke-width="1" shape-rendering="crispEdges"/>
  <path d="M623.500 59h8l-4 4.500z" fill="#b0b0b0"/>
  <!-- cap icon -->
  <g transform="translate(694.500,62.500) scale(.95)"><path d="M4.300 6.800v3.800c2 1.700 6.400 1.700 8.400 0v-3.800" fill="#fff" stroke="#3f8fcf" stroke-width="1.200"/><path d="M1 4.800l7.500-3.800l7.500 3.800l-7.500 3.800z" fill="#c4e2f6" stroke="#3f8fcf" stroke-width="1.200" stroke-linejoin="round"/><path d="M2.300 5.800v6.200" stroke="#3f8fcf" stroke-width="1.300"/></g>
  <g fill="#cf161a" font-size="14" stroke="#cf161a" stroke-width=".3">
    <text x="609" y="111" textLength="51" lengthAdjust="spacingAndGlyphs">1.163768</text>
    <text x="609" y="188" textLength="51" lengthAdjust="spacingAndGlyphs">1.158696</text>
    <text x="609" y="265" textLength="51" lengthAdjust="spacingAndGlyphs">1.153623</text>
    <text x="609" y="342" textLength="51" lengthAdjust="spacingAndGlyphs">1.148551</text>
  </g>
  <!-- markers -->
  <defs>
    <g id="mk">
      <path d="M0 -1.300L4 -5H2V-8.300H-2V-5H-4z" fill="#e8452c" stroke="#fff" stroke-width=".9" stroke-linejoin="round"/>
      <path d="M0 1.300L4 5H2V8.300H-2V5H-4z" fill="#1f6fd0" stroke="#fff" stroke-width=".9" stroke-linejoin="round"/>
    </g>
  </defs>
  <use href="#mk" x="303" y="97.800"/>
  <use href="#mk" x="338.300" y="150"/>
  <use href="#mk" x="349.800" y="172.600"/>
  <use href="#mk" x="400.500" y="250.700"/>
  <use href="#mk" x="494.600" y="201.300"/>
  <use href="#mk" x="507.300" y="174.800"/>
  <use href="#mk" x="588.300" y="98.300"/>
  <use href="#mk" x="600.500" y="147.500"/>
  <use href="#mk" x="626" y="98.300"/>
  <!-- red text -->
  <g fill="#cf161a" stroke="#cf161a" stroke-width="0.35" font-size="14">
    <text y="234"><tspan x="278" textLength="78" lengthAdjust="spacingAndGlyphs">数据库净值</tspan><tspan x="357.500" textLength="46.5" lengthAdjust="spacingAndGlyphs">=644.01</tspan></text>
    <text x="278" y="255" textLength="111" lengthAdjust="spacingAndGlyphs">ACCOUNT=506149</text>
    <text y="274"><tspan x="278" textLength="78" lengthAdjust="spacingAndGlyphs">历史总利润</tspan><tspan x="357.500" textLength="129.5" lengthAdjust="spacingAndGlyphs">=242.59999999999905</tspan></text>
    <text x="278" y="292.500" textLength="324" lengthAdjust="spacingAndGlyphs">微信: tuweitian2000 邮箱: tuweitian2000@foxmail.com</text>
  </g>
</svg>
<!-- chart buttons -->
<div class="abs cbtn" style="left:277px;width:120px"><span>一键平所有单</span></div>
<div class="abs cbtn" style="left:407px;width:179px"><span>设置初始净值到数据库</span></div>
<div class="abs cbtn" style="left:592px;width:79px"><span>开多单</span></div>
<div class="abs cbtn" style="left:678px;width:36px;border-right:0;overflow:hidden;text-align:left;padding-left:11px"><span>开空单</span></div>
<div class="abs" style="left:272px;top:328px;width:442px;height:2px;background:#ffd700"></div>
<style>
.cbtn{top:302px;height:30px;background:#f0f0f0;border:2px solid;border-color:#fff #808080 #808080 #fff;text-align:center;white-space:nowrap;font-size:14px;line-height:24px;color:#1a1ad8;letter-spacing:2.200px;text-indent:2px}
</style>
<!-- popup -->
<div class="abs" style="left:386px;top:56px;width:52px;height:51px;background:#fff"></div>
<div class="t" style="left:389px;top:59px;font-size:12.500px;color:#a8a8a8;line-height:15px">Poi...</div>
<div class="abs" style="left:418px;top:57px;width:19px;height:19px;background:#e6dcdc"></div>
<div class="abs" style="left:387px;top:81px;width:50px;height:24px;background:#e4e4e4;border:2px solid #1979ca"></div>
<div class="t" style="left:398px;top:86px;font-size:13px;color:#111;line-height:15px">Start</div>
<!-- chart tabs -->
<div class="abs" style="left:269px;top:378px;width:496px;height:22px;background:#f0f0f0"></div>
<div class="abs" style="left:269px;top:378px;width:1px;height:22px;background:#a0a0a0"></div>
<div class="abs" style="left:273px;top:378px;width:100px;height:21px;background:#fff;border:1px solid #333;border-top:0;box-shadow:1px 1px 0 #777"></div>
<div class="t" style="left:284px;top:382px;font-size:12px;color:#111">EURUSD.s,H1</div>
<div class="t" style="left:385px;top:382px;font-size:12px;color:#8a8a8a">XAUUSD.s,M30</div>
<svg class="abs" style="left:726px;top:385px" width="28" height="8"><path d="M4.500 0.500v7l-4-3.500zM23.500 0.500v7l4-3.500z" fill="#c8c8c8"/></svg>

<!-- ===== TOOLBOX ===== -->
<div class="abs" style="left:0;top:400px;width:765px;height:5px;background:#f0f0f0"></div>
<div class="abs" style="left:17px;top:405px;width:748px;height:95px;background:#fff"></div>
<div class="abs" style="left:0;top:405px;width:17px;height:95px;background:#c8d2de"></div>
<svg class="x" style="left:2px;top:411px" viewBox="0 0 11 11"><path d="M1.500 1.500l8 8M9.500 1.500l-8 8" stroke="#111" stroke-width="1.700"/></svg>
<div class="abs" style="left:17px;top:450px;width:748px;height:21px;background:#f1f1f1"></div>
<div class="abs" style="left:17px;top:471px;width:748px;height:22px;background:#d2d2d2"></div>
<div class="hsep" style="left:17px;top:428px;width:748px"></div>
<!-- column separators -->
<div class="vsep bs" style="left:85px"></div>
<div class="vsep bs" style="left:133px"></div>
<div class="vsep bs" style="left:213px"></div>
<div class="vsep bs" style="left:266px"></div>
<div class="vsep bs" style="left:320px"></div>
<div class="vsep bs" style="left:372px"></div>
<div class="vsep bs" style="left:426px"></div>
<div class="vsep bs" style="left:478px"></div>
<div class="vsep bs" style="left:531px"></div>
<div class="vsep bs" style="left:585px"></div>
<div class="vsep bs" style="left:643px"></div>
<style>.bs{top:406px;height:65px;background:#d2d2d2}.r{text-align:right}</style>
<!-- header -->
<div class="t th" style="left:23px;top:411px">交易...</div>
<svg class="abs" style="left:74px;top:415px" width="8" height="5"><path d="M0 4.500h7l-3.500-4z" fill="#222"/></svg>
<div class="t th" style="left:92px;top:411px">订单号</div>
<div class="t th r" style="right:557px;top:411px">时间</div>
<div class="t th r" style="right:504px;top:411px">类型</div>
<div class="t th r" style="right:450px;top:411px">交易量</div>
<div class="t th r" style="right:398px;top:411px">价位</div>
<div class="t th r" style="right:345px;top:411px">止损</div>
<div class="t th r" style="right:292px;top:411px">止盈</div>
<div class="t th r" style="right:237px;top:411px">价位</div>
<div class="t th r" style="right:185px;top:411px">库存费</div>
<div class="t th r" style="right:127px;top:411px">盈利</div>
<div class="t th r" style="right:3px;top:411px">注释</div>
<!-- row 1 -->
<svg class="abs" style="left:20px;top:433px" width="12" height="15" viewBox="0 0 12 15"><rect x="1" y="1" width="10" height="13" rx="2" fill="#fff" stroke="#2a7ea8" stroke-width="1.200"/><path d="M4.500 5h3M4.500 7.500h3" stroke="#2a7ea8" stroke-width="1"/></svg>
<div class="t td" style="left:38px;top:434px">eurus...</div>
<div class="t td" style="left:90px;top:434px">3363...</div>
<div class="t td" style="left:139px;top:434px">2025.12.03...</div>
<div class="t td r" style="right:502px;top:434px">buy</div>
<div class="t td r" style="right:450px;top:434px">0.01</div>
<div class="t td r" style="right:397px;top:434px">1.16377</div>
<div class="t td" style="left:375px;top:434px">0.1...</div>
<div class="t td r" style="right:236px;top:434px">1.16408</div>
<div class="t td r" style="right:145px;top:434px;color:#2222e0">0.31</div>
<div class="t td r" style="right:2px;top:434px">buy_1.163768</div>
<svg class="abs" style="left:411px;top:436px" width="10" height="10"><path d="M1.500 1.500l7 7M8.500 1.500l-7 7" stroke="#8c8c8c" stroke-width="1.500"/></svg>
<svg class="abs" style="left:628px;top:436px" width="10" height="10"><path d="M1.500 1.500l7 7M8.500 1.500l-7 7" stroke="#8c8c8c" stroke-width="1.500"/></svg>
<!-- row 2 -->
<svg class="abs" style="left:20px;top:454px" width="12" height="15" viewBox="0 0 12 15"><rect x="1" y="1" width="10" height="13" rx="2" fill="#fff" stroke="#c8483c" stroke-width="1.200"/><path d="M4.500 5h3M4.500 7.500h3" stroke="#c8483c" stroke-width="1"/></svg>
<div class="t td" style="left:38px;top:455px">eurus...</div>
<div class="t td" style="left:90px;top:455px">3364...</div>
<div class="t td" style="left:139px;top:455px">2025.12.03...</div>
<div class="t td r" style="right:502px;top:455px">sell</div>
<div class="t td r" style="right:450px;top:455px">0.01</div>
<div class="t td r" style="right:397px;top:455px">1.16378</div>
<div class="t td" style="left:375px;top:455px">2.1...</div>
<div class="t td r" style="right:236px;top:455px">1.16419</div>
<div class="t td r" style="right:145px;top:455px;color:#e0202a">-0.41</div>
<div class="t td r" style="right:2px;top:455px">sell_1.163768</div>
<svg class="abs" style="left:411px;top:457px" width="10" height="10"><path d="M1.500 1.500l7 7M8.500 1.500l-7 7" stroke="#8c8c8c" stroke-width="1.500"/></svg>
<svg class="abs" style="left:628px;top:457px" width="10" height="10"><path d="M1.500 1.500l7 7M8.500 1.500l-7 7" stroke="#8c8c8c" stroke-width="1.500"/></svg>
<!-- summary -->
<svg class="abs" style="left:19px;top:476px" width="14" height="14"><circle cx="7" cy="7" r="5.500" fill="none" stroke="#222" stroke-width="1.200"/><path d="M4 7h6" stroke="#222" stroke-width="1.300"/></svg>
<div class="t td" style="left:38px;top:476px;font-weight:bold;word-spacing:0">结余: 644.01 USD</div>
<div class="t td" style="left:145px;top:476px;font-weight:bold">净值: 643.91</div>
<div class="t td" style="left:221px;top:476px;font-weight:bold">预付款: 2.33</div>
<div class="t td" style="left:297px;top:476px;font-weight:bold">可用预付款: 641.58</div>
<div class="t td" style="left:410px;top:476px;font-weight:bold">预付款维持率: 27 635.62 %</div>
<div class="t td r" style="right:144px;top:476px;font-weight:bold">-0.10</div>

</body>
</html>
